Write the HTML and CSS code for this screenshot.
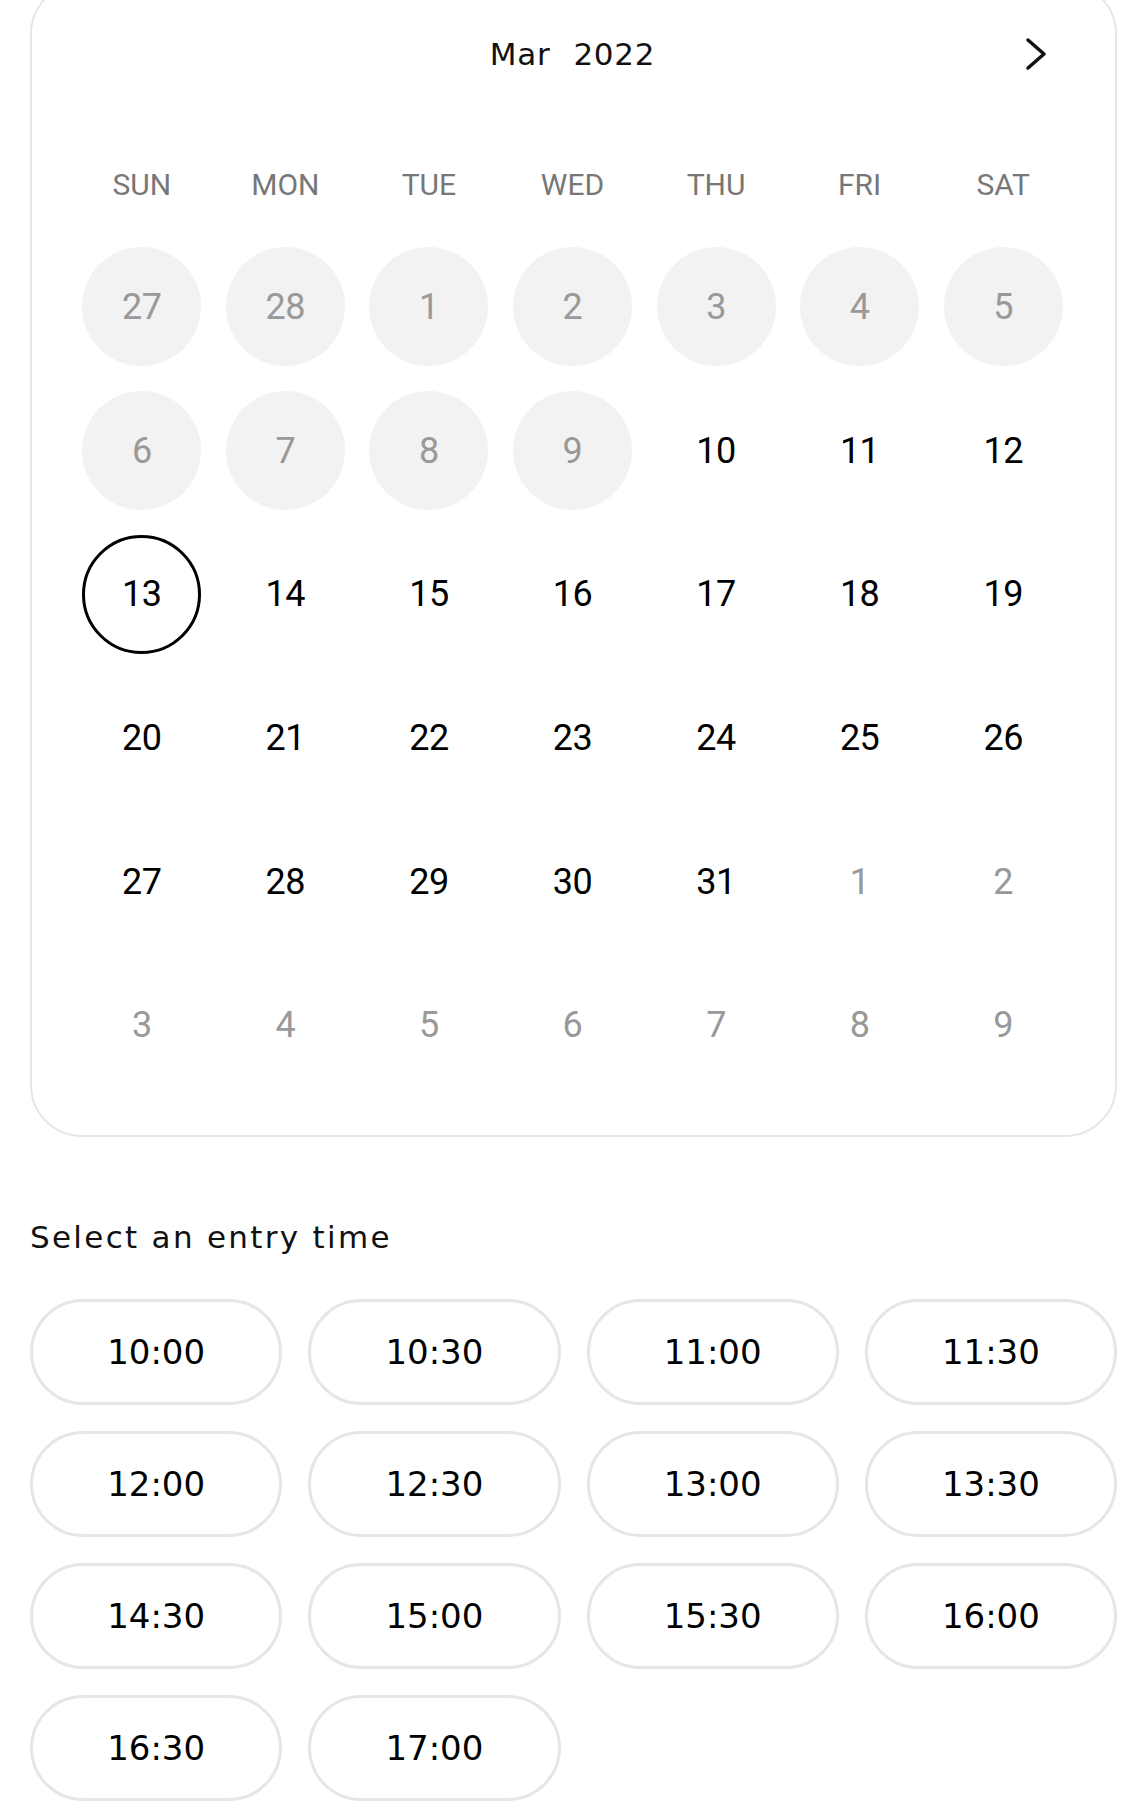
FILE: index.html
```html
<!DOCTYPE html>
<html lang="en">
<head>
  <meta charset="UTF-8" />
  <meta name="viewport" content="width=device-width, initial-scale=1.0"/>
  <title>Book a visit</title>
  <link rel="stylesheet" href="styles.css">
</head>
<body>
  <section class="calendar">
    <div class="cal-header">
      <span></span>
      <h2 class="cal-title"><span>Mar</span><span>2022</span></h2>
      <button class="cal-next" aria-label="Next month">
        <svg width="22" height="34" viewBox="0 0 22 34" fill="none" stroke="#111" stroke-width="3.5" stroke-linecap="round" stroke-linejoin="round">
          <polyline points="3,3 19,17 3,31" />
        </svg>
      </button>
    </div>

    <div class="weekdays">
      <span>SUN</span><span>MON</span><span>TUE</span><span>WED</span><span>THU</span><span>FRI</span><span>SAT</span>
    </div>

    <div class="days">
      <!-- past days are greyed out -->
      <span class="day past">27</span>
      <span class="day past">28</span>
      <span class="day past">1</span>
      <span class="day past">2</span>
      <span class="day past">3</span>
      <span class="day past">4</span>
      <span class="day past">5</span>

      <span class="day past">6</span>
      <span class="day past">7</span>
      <span class="day past">8</span>
      <span class="day past">9</span>
      <span class="day">10</span>
      <span class="day">11</span>
      <span class="day">12</span>

      <span class="day selected">13</span>
      <span class="day">14</span>
      <span class="day">15</span>
      <span class="day">16</span>
      <span class="day">17</span>
      <span class="day">18</span>
      <span class="day">19</span>

      <span class="day">20</span>
      <span class="day">21</span>
      <span class="day">22</span>
      <span class="day">23</span>
      <span class="day">24</span>
      <span class="day">25</span>
      <span class="day">26</span>

      <span class="day">27</span>
      <span class="day">28</span>
      <span class="day">29</span>
      <span class="day">30</span>
      <span class="day">31</span>
      <span class="day other">1</span>
      <span class="day other">2</span>

      <span class="day other">3</span>
      <span class="day other">4</span>
      <span class="day other">5</span>
      <span class="day other">6</span>
      <span class="day other">7</span>
      <span class="day other">8</span>
      <span class="day other">9</span>
    </div>
  </section>

  <section class="times">
    <h3 class="times-title">Select an entry time</h3>
    <div class="slots">
      <button class="slot">10:00</button>
      <button class="slot">10:30</button>
      <button class="slot">11:00</button>
      <button class="slot">11:30</button>
      <button class="slot">12:00</button>
      <button class="slot">12:30</button>
      <button class="slot">13:00</button>
      <button class="slot">13:30</button>
      <button class="slot">14:30</button>
      <button class="slot">15:00</button>
      <button class="slot">15:30</button>
      <button class="slot">16:00</button>
      <button class="slot">16:30</button>
      <button class="slot">17:00</button>
    </div>
  </section>
</body>
</html>
```

FILE: styles.css
```css
/* Base */
body {
  margin: 0;
  padding: 0 23px 0 30px;
  background: #fff;
  color: #111;
  font-family: 'DejaVu Sans', sans-serif;
}

/* Calendar card */
.calendar {
  margin-top: -18px;
  padding: 35px 40px 38px 38px;
  border: 2px solid #e6e6e6;
  border-radius: 52px;
}

.cal-header {
  display: grid;
  grid-template-columns: 1fr auto 1fr;
  align-items: center;
  height: 70px;
  padding: 0 28px;
}

.cal-title {
  display: flex;
  gap: 23px;
  margin: 0;
  font-size: 31px;
  font-weight: normal;
  letter-spacing: 0.7px;
}

.cal-next {
  justify-self: end;
  display: flex;
  padding: 0;
  border: none;
  background: none;
  cursor: pointer;
}

.weekdays,
.days {
  display: grid;
  grid-template-columns: repeat(7, 1fr);
  font-family: Roboto, sans-serif;
}

.weekdays {
  margin-top: 70px;
  height: 50px;
  align-items: center;
  justify-items: center;
  font-size: 30px;
  color: #777;
}

.days {
  margin-top: 26px;
  grid-auto-rows: 143.7px;
  align-items: center;
  justify-items: center;
}

.day {
  display: flex;
  align-items: center;
  justify-content: center;
  width: 119px;
  height: 119px;
  border-radius: 50%;
  box-sizing: border-box;
  font-size: 36px;
  letter-spacing: -0.5px;
  color: #000;
}

.day.past {
  background: #f2f2f2;
  color: #999;
}

.day.other {
  color: #999;
}

.day.selected {
  border: 3px solid #000;
}

/* Entry times */
.times-title {
  margin: 80px 0 42px;
  height: 40px;
  line-height: 40px;
  font-size: 31px;
  font-weight: normal;
  letter-spacing: 2.3px;
}

.slots {
  display: grid;
  grid-template-columns: repeat(4, 1fr);
  gap: 26px;
}

.slot {
  height: 106px;
  border: 3px solid #e6e6e6;
  border-radius: 53px;
  background: #fff;
  color: #000;
  font-family: 'DejaVu Sans', sans-serif;
  font-size: 34px;
  cursor: pointer;
}
```
